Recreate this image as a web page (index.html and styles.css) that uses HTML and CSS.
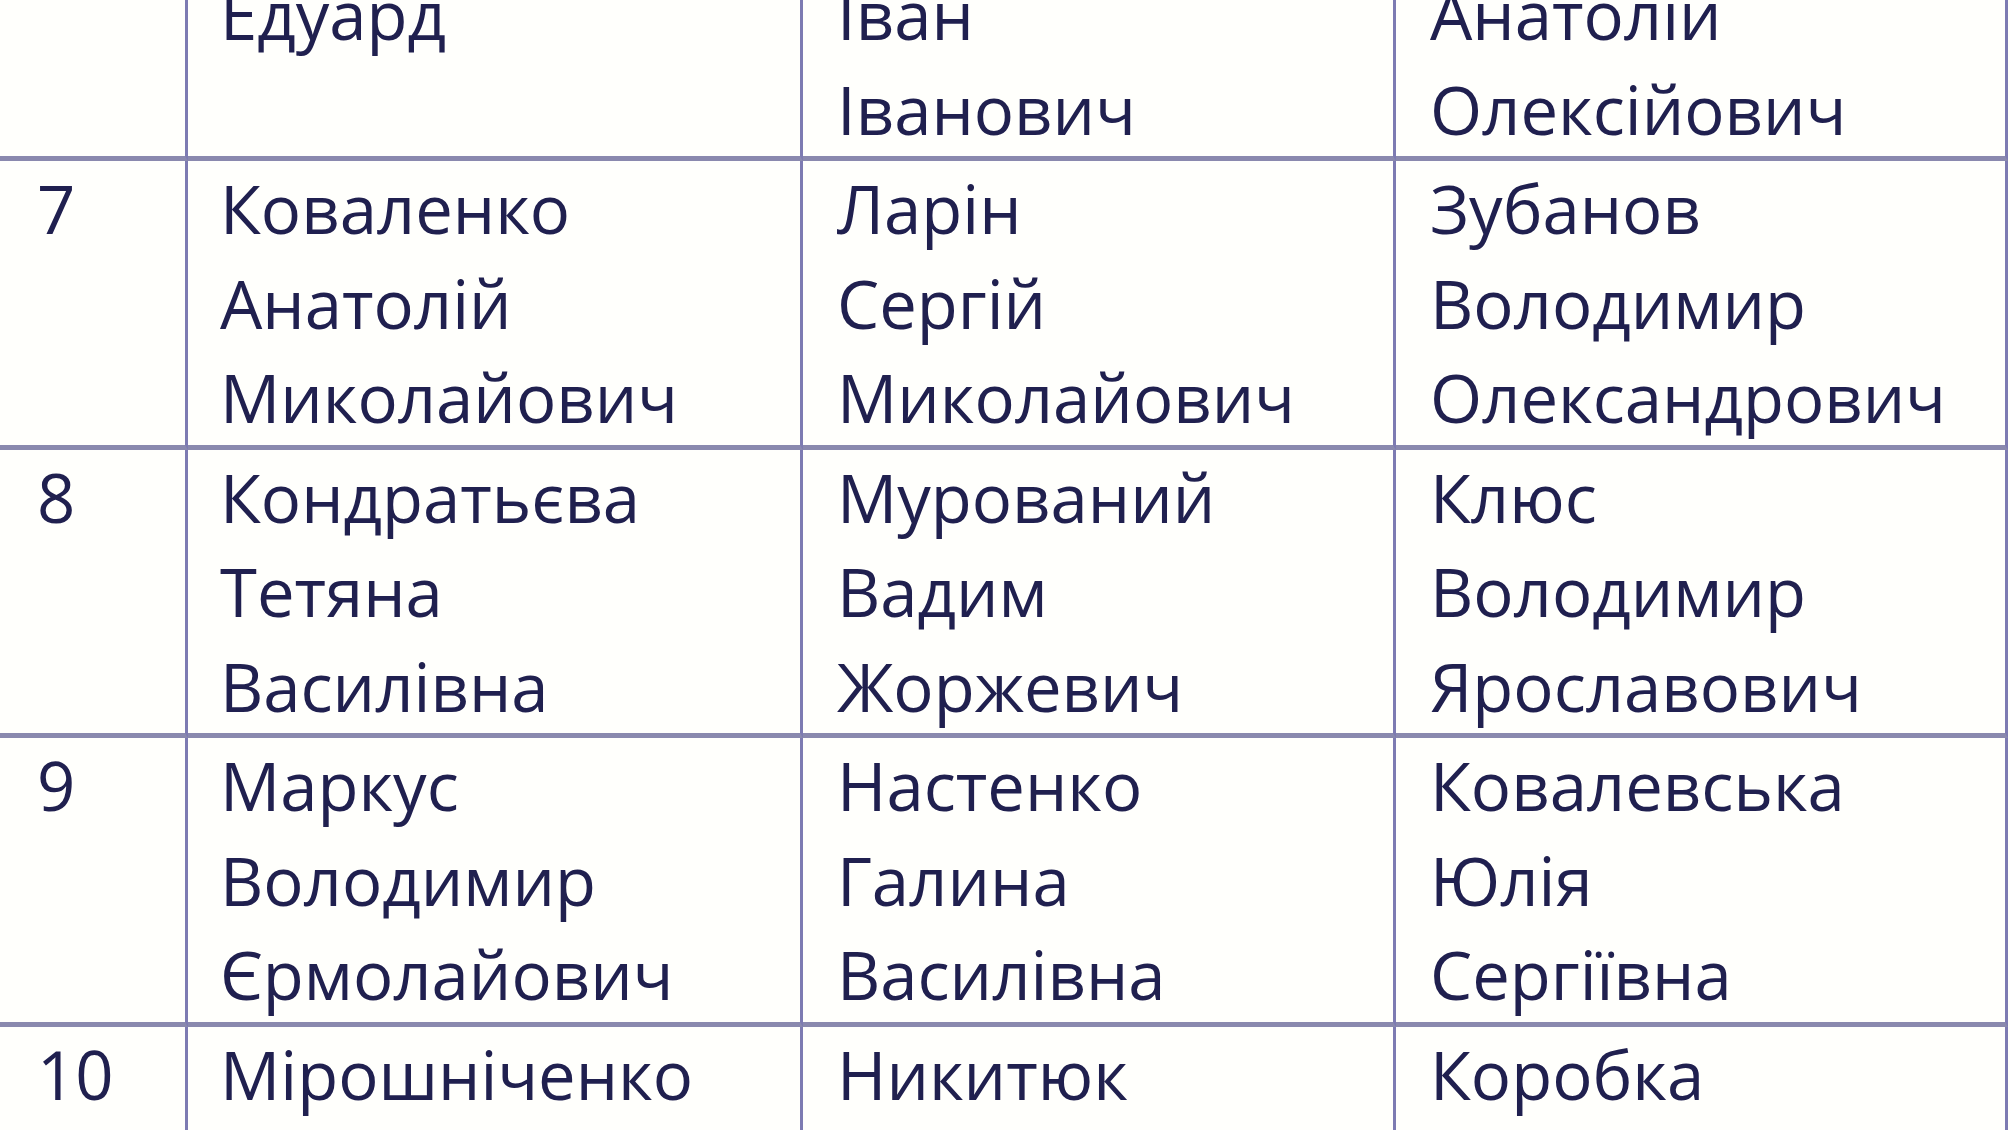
FILE: index.html
```html
<!DOCTYPE html>
<html lang="uk">
<head>
<meta charset="utf-8">
<title>Список</title>
<link rel="stylesheet" href="styles.css">
</head>
<body>
<div class="sheet">
  <div class="grid">
    <div class="cell num top"></div>
    <div class="cell first top">Едуард</div>
    <div class="cell top">Іван<br>Іванович</div>
    <div class="cell top">Анатолій<br>Олексійович</div>

    <div class="cell num">7</div>
    <div class="cell first">Коваленко<br>Анатолій<br>Миколайович</div>
    <div class="cell">Ларін<br>Сергій<br>Миколайович</div>
    <div class="cell">Зубанов<br>Володимир<br>Олександрович</div>

    <div class="cell num">8</div>
    <div class="cell first">Кондратьєва<br>Тетяна<br>Василівна</div>
    <div class="cell">Мурований<br>Вадим<br>Жоржевич</div>
    <div class="cell">Клюс<br>Володимир<br>Ярославович</div>

    <div class="cell num">9</div>
    <div class="cell first">Маркус<br>Володимир<br>Єрмолайович</div>
    <div class="cell">Настенко<br>Галина<br>Василівна</div>
    <div class="cell">Ковалевська<br>Юлія<br>Сергіївна</div>

    <div class="cell num last">10</div>
    <div class="cell first last">Мірошніченко</div>
    <div class="cell last">Никитюк</div>
    <div class="cell last">Коробка</div>
  </div>
</div>
</body>
</html>
```
FILE: styles.css
```css
html, body {
  margin: 0;
  padding: 0;
  background: #fffffc;
}
body {
  width: 2010px;
  height: 1130px;
  overflow: hidden;
}
.sheet {
  width: 2010px;
  height: 1130px;
  overflow: hidden;
}
.grid {
  display: grid;
  grid-template-columns: 188px 615px 593px 612px;
  margin-top: -33px;
  font-family: "Open Sans", "Noto Sans", sans-serif;
  font-size: 67px;
  font-weight: 500;
  line-height: 94.5px;
  color: #20204f;
}
.cell {
  box-sizing: border-box;
  border-right: 3px solid #7d7bb2;
  border-bottom: 5px solid #8a89ae;
  padding-left: 34px;
  min-height: 288.5px;
  white-space: nowrap;
}
.cell.first {
  padding-left: 32px;
}
.cell.top {
  min-height: 194px;
}
.cell.num {
  padding-left: 37px;
}
.cell.last {
  min-height: 288.5px;
}
```
